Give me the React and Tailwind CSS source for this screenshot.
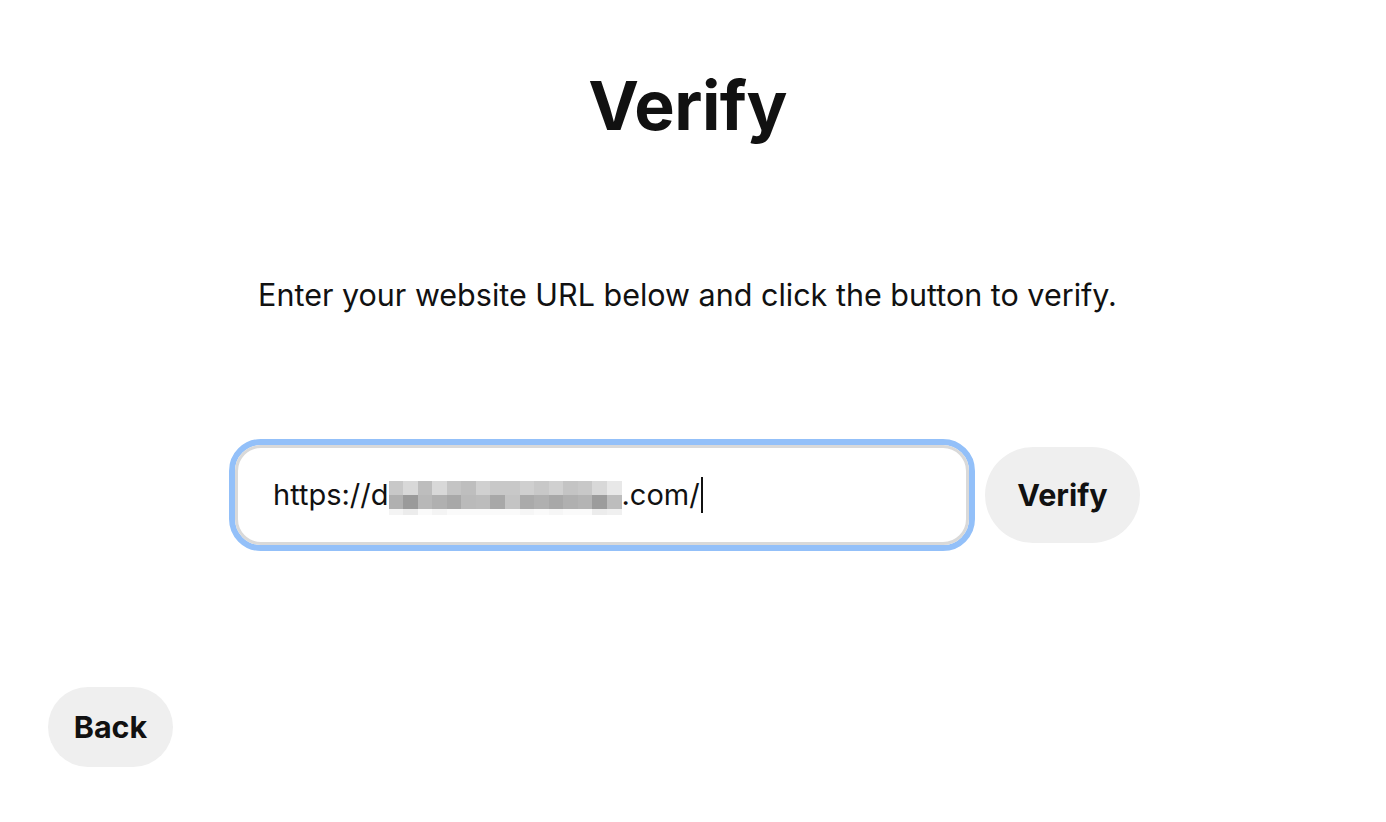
import React from "react";

const top = ["#c8c8c8","#d8d8d8","#bdbdbd","#d8d8d8","#c4c4c4","#bebebe","#d0d0d0","#c8c8c8","#c8c8c8","#cfcfcf","#c8c8c8","#d0d0d0","#c4c4c4","#c8c8c8","#d8d8d8","#e8e8e8"];
const mid = ["#b0b0b0","#9a9a9a","#b8b8b8","#b0b0b0","#a8a8a8","#bababa","#bcbcbc","#a8a8a8","#c4c4c4","#aaaaaa","#b0b0b0","#a8a8a8","#b0b0b0","#b4b4b4","#9c9c9c","#bdbdbd"];
const bot = ["#f4f4f4","#ececec","#fafafa","#f4f4f4","#fafafa","#fafafa","#fafafa","#fafafa","#fafafa","#f6f6f6","#fafafa","#f6f6f6","#fafafa","#fafafa","#ececec","#f0f0f0"];

function Pixels() {
  return (
    <span className="inline-flex flex-col w-[233px] h-[34px] translate-y-[3px]">
      {[top, mid, bot].map((row, i) => (
        <span key={i} className={`flex ${i === 2 ? "h-[6px]" : "h-[14px]"}`}>
          {row.map((c, j) => (
            <span key={j} className="flex-1" style={{ backgroundColor: c }} />
          ))}
        </span>
      ))}
    </span>
  );
}

export default function App() {
  return (
    <div
      className="w-[1386px] h-[822px] bg-white text-[#111111] flex flex-col"
      style={{ fontFamily: "Inter, 'Noto Sans', sans-serif" }}
    >
      <h1 className="text-[68px] font-bold text-center mt-[60px] leading-[90px] tracking-[-0.5px] pr-[11px]">Verify</h1>
      <p className="text-[30.5px] text-center mt-[125px] leading-[40px] pr-[11px]">
        Enter your website URL below and click the button to verify.
      </p>
      <div className="flex items-center mt-[124px] pl-[229px] gap-[10px]">
        <div className="w-[746px] h-[112px] border-[6px] border-[#93c0f9] rounded-[32px]">
          <div className="w-full h-full border-[3px] border-[#d9d9d9] rounded-[26px] bg-white flex items-center pl-[35px] text-[29px]">
            <span>https://d</span>
            <Pixels />
            <span>.com/</span>
            <span className="inline-block w-[2px] h-[36px] bg-[#111] ml-[1px]" />
          </div>
        </div>
        <button className="w-[155px] h-[96px] rounded-full bg-[#efefef] text-[30.5px] font-bold">Verify</button>
      </div>
      <div className="mt-[136px] pl-[48px]">
        <button className="w-[125px] h-[80px] rounded-full bg-[#efefef] text-[30.5px] font-bold">Back</button>
      </div>
    </div>
  );
}
